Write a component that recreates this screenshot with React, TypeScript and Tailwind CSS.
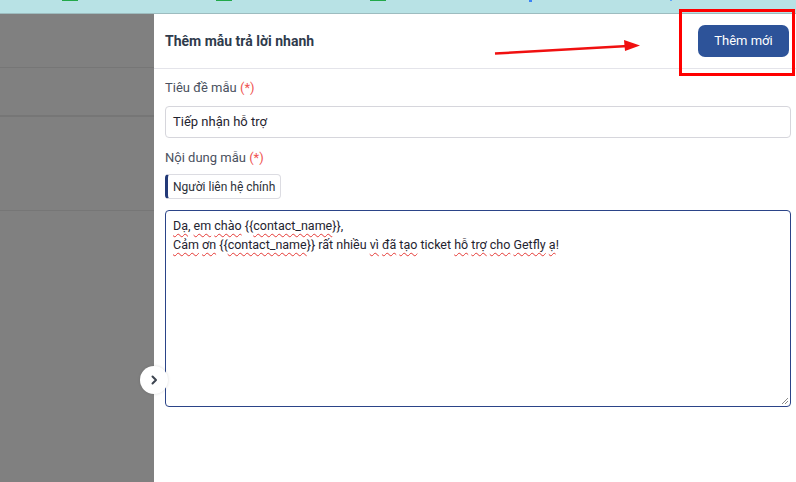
import React from "react";

export default function App() {
  const font = { fontFamily: "Roboto, 'Noto Sans', sans-serif" };
  const squiggle = "underline decoration-wavy decoration-[#e53935] decoration-1 underline-offset-[3px]";
  return (
    <div className="relative w-[796px] h-[482px] overflow-hidden bg-white" style={font}>
      {/* top bar */}
      <div className="relative h-[14px] bg-[#b8e2e5] border-b border-[#9dbcbf]">
        <div className="absolute top-0 left-[62px] w-[16px] h-[1px] bg-[#22a84a]" />
        <div className="absolute top-0 left-[216px] w-[16px] h-[1px] bg-[#22a84a]" />
        <div className="absolute top-0 left-[370px] w-[16px] h-[1px] bg-[#22a84a]" />
        <div className="absolute top-0 left-[529px] w-[3px] h-[2px] bg-[#3b82f6]" />
        <div className="absolute top-0 left-[670px] w-[2px] h-[1px] bg-[#60a5fa]" />
      </div>
      <div className="flex h-[468px]">
        {/* left overlay */}
        <div className="w-[154px] shrink-0 bg-[#808080] flex flex-col">
          <div className="h-[54px] border-b border-[#767676]" />
          <div className="h-[49px] border-b-2 border-[#767676]" />
          <div className="h-[94px] border-b border-[#767676]" />
        </div>
        {/* panel */}
        <div className="relative flex-1 flex flex-col bg-white">
          <div className="h-[55px] flex items-center justify-between pl-[11px] pr-[6px] border-b border-[#e4e4ea]">
            <div className="text-[14px] font-bold text-[#2f3b4c]">Thêm mẫu trả lời nhanh</div>
            <button className="w-[91px] h-[32px] rounded-[7px] bg-[#2d5399] text-white text-[13px] mr-[1px] mt-[-1px]">Thêm mới</button>
          </div>
          <div className="flex flex-col pl-[11px] pr-[5px]">
            <div className="mt-[11px] text-[13px] text-[#4a5160] leading-[16px]">
              Tiêu đề mẫu <span className="text-[#ef5350]">(*)</span>
            </div>
            <div className="mt-[10px] h-[32px] rounded-[4px] border border-[#d6d6dc] flex items-center px-[7px] text-[13px] text-[#1f2430]">
              Tiếp nhận hỗ trợ
            </div>
            <div className="mt-[12px] text-[13px] text-[#4a5160] leading-[16px]">
              Nội dung mẫu <span className="text-[#ef5350]">(*)</span>
            </div>
            <div className="mt-[8px] flex">
              <div className="h-[25px] rounded-[4px] border border-[#dcdce2] border-l-[3px] border-l-[#233a78] flex items-center pl-[5px] pr-[5px] text-[12px] text-[#2b2f38]">
                Người liên hệ chính
              </div>
            </div>
            <div className="mt-[11px] h-[197px] rounded-[4px] border border-[#2b4488] relative px-[7px] py-[5px] text-[12.5px] text-[#1f2430] leading-[19px]">
              <div>
                <span className={squiggle}>Dạ</span>, <span className={squiggle}>em</span> <span className={squiggle}>chào</span> {"{{"}<span className={squiggle}>contact_name</span>{"}}"},
              </div>
              <div>
                <span className={squiggle}>Cảm</span> <span className={squiggle}>ơn</span> {"{{"}<span className={squiggle}>contact_name</span>{"}}"} rất nhiều <span className={squiggle}>vì</span> <span className={squiggle}>đã</span> <span className={squiggle}>tạo</span> ticket <span className={squiggle}>hỗ</span> <span className={squiggle}>trợ</span> <span className={squiggle}>cho</span> <span className={squiggle}>Getfly</span> <span className={squiggle}>ạ</span>!
              </div>
              <svg className="absolute right-[1px] bottom-[1px]" width="9" height="9" viewBox="0 0 9 9">
                <path d="M8 2 L2 8 M8 5 L5 8" stroke="#8a8a8a" strokeWidth="1" />
              </svg>
            </div>
          </div>
        </div>
      </div>
      {/* collapse circle */}
      <div className="absolute left-[140px] top-[366px] w-[28px] h-[28px] rounded-full bg-white shadow-[0_0_3px_rgba(0,0,0,0.15)] flex items-center justify-center">
        <svg width="12" height="12" viewBox="0 0 12 12">
          <path d="M4.5 2.5 L8 6 L4.5 9.5" stroke="#3d4450" strokeWidth="2" fill="none" strokeLinecap="round" strokeLinejoin="round" />
        </svg>
      </div>
      {/* annotation: red rectangle */}
      <div className="absolute left-[679px] top-[9px] w-[116px] h-[67px] border-[3px] border-[#ff0000]" />
      {/* annotation: arrow */}
      <svg className="absolute left-0 top-0" width="796" height="482" viewBox="0 0 796 482" style={{ pointerEvents: "none" }}>
        <line x1="495" y1="53.5" x2="628" y2="46" stroke="#f01010" strokeWidth="2.5" />
        <polygon points="640,45.5 624,40 625,51" fill="#f01010" />
      </svg>
    </div>
  );
}
